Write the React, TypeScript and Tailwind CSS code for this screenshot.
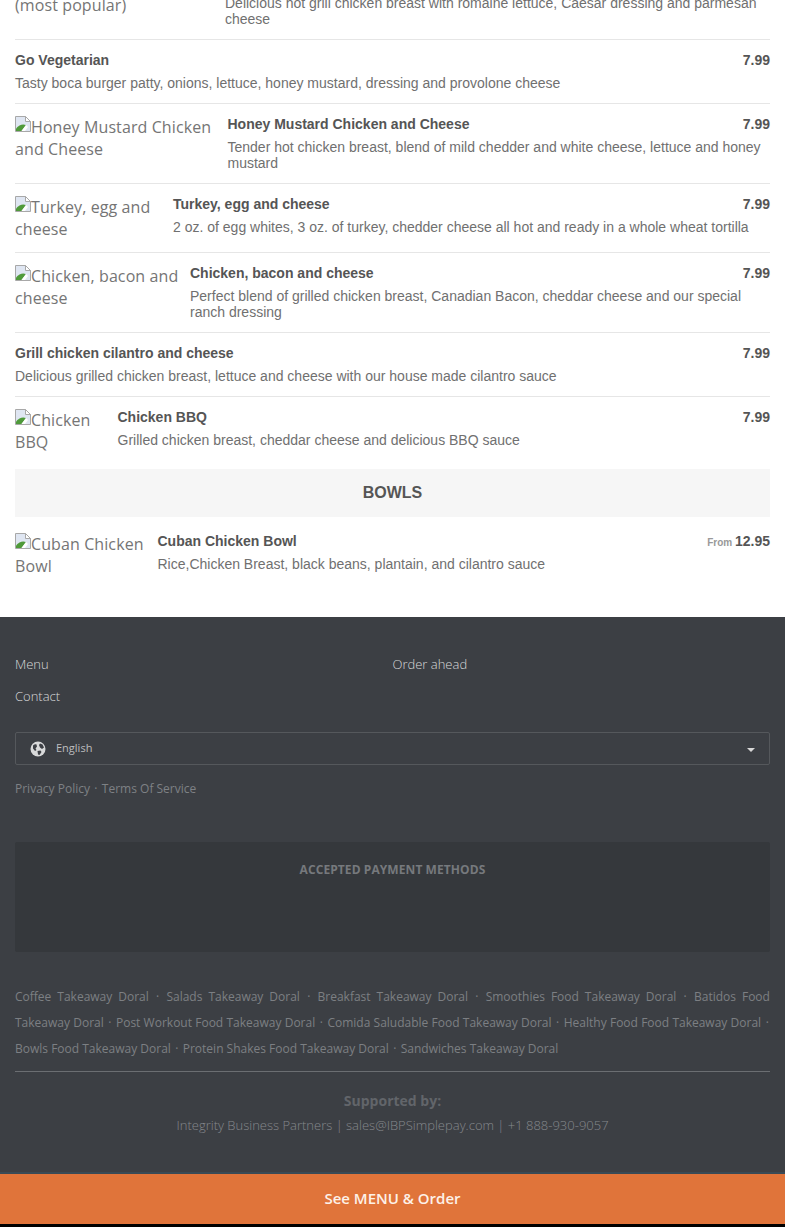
const items = [
  {
    name: "Chicken Caesar",
    alt: "Chicken Caesar (most\u00a0popular)",
    imgClass: "w-[195px]",
    desc: "Delicious hot grill chicken breast with romaine lettuce, Caesar dressing and parmesan cheese",
  },
  { name: "Go Vegetarian", desc: "Tasty boca burger patty, onions, lettuce, honey mustard, dressing and provolone cheese" },
  {
    name: "Honey Mustard Chicken and Cheese",
    alt: "Honey Mustard Chicken and Cheese",
    imgClass: "w-[197.5px]",
    desc: "Tender hot chicken breast, blend of mild chedder and white cheese, lettuce and honey mustard",
  },
  {
    name: "Turkey, egg and cheese",
    alt: "Turkey, egg and cheese",
    imgClass: "w-[143px]",
    desc: "2 oz. of egg whites, 3 oz. of turkey, chedder cheese all hot and ready in a whole wheat tortilla",
  },
  {
    name: "Chicken, bacon and cheese",
    alt: "Chicken, bacon and cheese",
    imgClass: "w-[165px] -mr-[5px]",
    desc: "Perfect blend of grilled chicken breast, Canadian Bacon, cheddar cheese and our special ranch dressing",
  },
  { name: "Grill chicken cilantro and cheese", desc: "Delicious grilled chicken breast, lettuce and cheese with our house made cilantro sauce" },
];

const takeaway = [
  "Coffee Takeaway Doral",
  "Salads Takeaway Doral",
  "Breakfast Takeaway Doral",
  "Smoothies Food Takeaway Doral",
  "Batidos Food Takeaway Doral",
  "Post Workout Food Takeaway Doral",
  "Comida Saludable Food Takeaway Doral",
  "Healthy Food Food Takeaway Doral",
  "Bowls Food Takeaway Doral",
  "Protein Shakes Food Takeaway Doral",
  "Sandwiches Takeaway Doral",
];

const BrokenImage = () => (
  <svg width="16" height="16" viewBox="0 0 16 16" className="inline-block align-[1px]">
    <path d="M0.5 0.5H10.5L15.5 5.5V15.5H0.5Z" fill="#dfe6f2" stroke="#a8a8a8" />
    <path d="M10.5 0.5V5.5H15.5Z" fill="#ffffff" stroke="#a8a8a8" />
    <path d="M1 15V12.5C4 9 7.5 7.5 11 9L6.5 15Z" fill="#4f9a3a" />
    <path d="M6.5 15L11 9L13 11L10 15Z" fill="#ffffff" />
  </svg>
);

const Thumb = ({ alt, className }: { alt: string; className: string }) => (
  <div className={`${className} shrink-0 font-['Open_Sans',sans-serif] text-[16px] leading-[22px] tracking-[0.1px] text-[#757575]`}>
    <BrokenImage />
    {alt}
  </div>
);

const Globe = () => (
  <svg width="16" height="16" viewBox="0 0 16 16" className="shrink-0">
    <circle cx="8" cy="8" r="7.5" fill="#d8d9da" />
    <path d="M3 4.5C4 3.5 5.5 3 6.5 3.5L7 5.5L5.5 7.5L6.5 9L5 10L3 7.5Z" fill="#3c3f44" />
    <path d="M10 2.5L12.5 3.5L14 6.5L12 8L10 6.5L9 4Z" fill="#3c3f44" />
    <path d="M7.5 10L10.5 9.5L11.5 11L9.5 14L8 13.5Z" fill="#3c3f44" />
  </svg>
);

const Sep = () => <span className="mx-[1.25px]">·</span>;

const Price = ({ value }: { value: string }) => (
  <span className="shrink-0 text-[14px] font-bold leading-4 text-[#555]">{value}</span>
);

const App = () => {
  return (
    <div className="h-[1227px] w-[785px] overflow-hidden bg-black font-['Liberation_Sans',Arial,sans-serif]">
      <div className="-mt-[40px] bg-white px-[15px]">
        {items.map((item, i) => (
          <div key={i} className="flex gap-[15px] border-b border-[#e6e6e6] py-[12px]">
            {item.alt && <Thumb alt={item.alt} className={item.imgClass} />}
            <div className="min-w-0 flex-1">
              <div className="flex h-4 justify-between">
                <span className="text-[14px] font-bold leading-4 text-[#555]">{item.name}</span>
                <Price value="7.99" />
              </div>
              <p className="mt-[7px] text-[14px] leading-4 text-[#707070]">{item.desc}</p>
            </div>
          </div>
        ))}
        <div className="flex gap-[15px] pb-[16px] pt-[12px]">
          <Thumb alt="Chicken BBQ" className="w-[87.5px]" />
          <div className="min-w-0 flex-1">
            <div className="flex h-4 justify-between">
              <span className="text-[14px] font-bold leading-4 text-[#555]">Chicken BBQ</span>
              <Price value="7.99" />
            </div>
            <p className="mt-[7px] text-[14px] leading-4 text-[#707070]">
              Grilled chicken breast, cheddar cheese and delicious BBQ sauce
            </p>
          </div>
        </div>
        <h2 className="h-[48px] bg-[#f6f6f6] text-center text-[16px] font-bold leading-[48px] text-[#555]">BOWLS</h2>
        <div className="flex gap-[15px] pb-[40px] pt-[16px]">
          <Thumb alt="Cuban Chicken Bowl" className="w-[130px] -mr-[2.5px]" />
          <div className="min-w-0 flex-1">
            <div className="flex h-4 justify-between">
              <span className="text-[14px] font-bold leading-4 text-[#555]">Cuban Chicken Bowl</span>
              <span className="leading-4">
                <span className="text-[10px] font-bold text-[#999]">From </span>
                <Price value="12.95" />
              </span>
            </div>
            <p className="mt-[7px] text-[14px] leading-4 text-[#707070]">
              Rice,Chicken Breast, black beans, plantain, and cilantro sauce
            </p>
          </div>
        </div>
      </div>

      <footer className="h-[557px] border-b-2 border-[#3a4a55] bg-[#3c3f44] px-[15px] pt-[31px] font-['Open_Sans',sans-serif]">
        <div className="grid grid-cols-2 text-[13px] font-light leading-[32px] text-[#d8d9da]">
          <a>Menu</a>
          <a>Order ahead</a>
          <a>Contact</a>
        </div>
        <div className="mt-[20px] flex h-[33px] items-center rounded-[2px] border border-[#55585c] pl-[14px] pr-[14px]">
          <Globe />
          <span className="ml-[10px] text-[11px] text-[#bcbdbf]">English</span>
          <span className="ml-auto mt-[3px] border-x-[4px] border-t-[4px] border-x-transparent border-t-[#d8d8d8]" />
        </div>
        <div className="mt-[15px] text-[12px] leading-[18px] text-[#7e8185]">
          Privacy Policy <Sep /> Terms Of Service
        </div>
        <div className="mt-[44px] h-[110px] rounded-[2px] bg-[#35383c] pt-[19px] text-center text-[12px] font-bold leading-[18px] tracking-[0.08px] text-[#76797d]">
          ACCEPTED PAYMENT METHODS
        </div>
        <p className="mt-[32px] text-justify text-[12px] leading-[26px] text-[#7c7f83]">
          {takeaway.map((t, i) => (
            <span key={t}>
              {t}
              {i < takeaway.length - 1 && (
                <>
                  {" "}
                  <Sep />{" "}
                </>
              )}
            </span>
          ))}
        </p>
        <div className="mt-[9px] border-t border-[#6b6e72] pt-[19px] text-center">
          <div className="text-[14px] font-bold leading-[19px] text-[#62656a]">Supported by:</div>
          <div className="mt-[6px] text-[13px] font-light leading-[18px] text-[#85888c]">
            Integrity Business Partners | sales@IBPSimplepay.com | +1 888-930-9057
          </div>
        </div>
      </footer>

      <div className="h-[50px] bg-[#e0743a] text-center font-['Open_Sans',sans-serif] text-[15px] font-semibold leading-[48px] text-[#fdf1e8]">
        See MENU &amp; Order
      </div>
    </div>
  );
};

export default App;
